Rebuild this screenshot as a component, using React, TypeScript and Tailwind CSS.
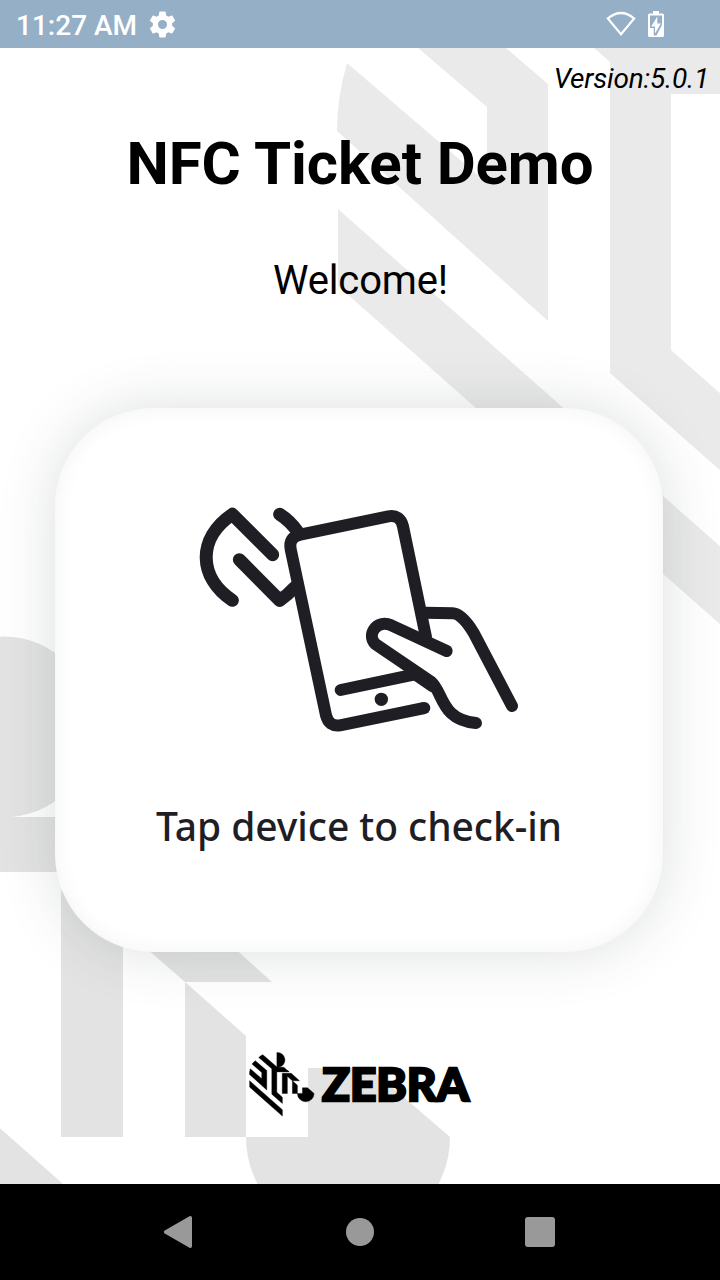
import React from "react";

function ZebraHead() {
  return (
    <>
      <path d="M347 63 L487 183 V107 L368 5 Q386 -18 408 -36 L548 84 V321 L337 131 Q337 97 347 63Z" />
      <path d="M338 209 L739 563 V641 L338 286Z" />
      <path d="M450 -76 Q475 -100 500 -110 L672 40 V-136 A90 90 0 0 1 689 44 H757 L820 99 V94 H671 V350 L739 410 V487 L610 373 V62Z" />
      <path d="M672 90 H809 L819 99 H672Z" />
      <path d="M738 117 H847 L949 209 H862 L800 155 V364 H738Z" />
      <path d="M862 209 L923 263 V364 H862Z" />
      <path d="M923 364 H985 V295 H1047 L1127 364 A102 102 0 0 1 923 364Z" />
    </>
  );
}

function Backdrop() {
  return (
    <svg className="absolute inset-0 h-full w-full" viewBox="0 48 720 1136" aria-hidden="true">
      <g fill="#eaeaea">
        <path d="M347 63 L487 183 V107 L368 5 Q386 -18 408 -36 L548 84 V321 L337 131 Q337 97 347 63Z" />
        <path d="M338 209 L739 563 V641 L338 286Z" />
        <path d="M594 48 H720 V94 H671 V350 L739 410 V487 L610 373 V62Z" />
      </g>
      <g fill="#e3e3e3" transform="translate(-677 773)">
        <ZebraHead />
      </g>
    </svg>
  );
}

function StatusBar() {
  return (
    <header className="flex h-12 shrink-0 items-center bg-[#95afc7] pl-4 pr-14 text-white">
      <span className="mt-1 font-['Roboto',sans-serif] text-[28px] font-medium leading-none">11:27 AM</span>
      <svg className="ml-[10px] h-[31px] w-[31px]" viewBox="0 0 24 24" fill="currentColor">
        <path d="M19.43 12.98c.04-.32.07-.64.07-.98s-.03-.66-.07-.98l2.11-1.65c.19-.15.24-.42.12-.64l-2-3.46c-.12-.22-.39-.3-.61-.22l-2.49 1c-.52-.4-1.08-.73-1.69-.98l-.38-2.65A.49.49 0 0 0 14 2h-4c-.25 0-.46.18-.49.42l-.38 2.65c-.61.25-1.17.59-1.69.98l-2.49-1c-.23-.09-.49 0-.61.22l-2 3.46c-.13.22-.07.49.12.64l2.11 1.65c-.04.32-.07.65-.07.98s.03.66.07.98l-2.11 1.65c-.19.15-.24.42-.12.64l2 3.46c.12.22.39.3.61.22l2.49-1c.52.4 1.08.73 1.69.98l.38 2.65c.03.24.24.42.49.42h4c.25 0 .46-.18.49-.42l.38-2.65c.61-.25 1.17-.59 1.69-.98l2.49 1c.23.09.49 0 .61-.22l2-3.46c.12-.22.07-.49-.12-.64l-2.11-1.65zM12 15.5a3.5 3.5 0 1 1 0-7 3.500 3.500 0 0 1 0 7z" />
      </svg>
      <svg className="ml-auto h-[26px] w-[30px]" viewBox="0 0 30 26" fill="none" stroke="currentColor" strokeWidth="2.2">
        <path d="M1.800 7.500 Q15 -3.500 28.200 7.500 L15 23.200Z" />
      </svg>
      <svg className="ml-3 h-[26px] w-4" viewBox="0 0 16 26">
        <path fill="currentColor" d="M5 0h6v2.500h3.500Q16 2.500 16 4v20.500Q16 26 14.500 26h-13Q0 26 0 24.500V4Q0 2.500 1.500 2.500H5Z" />
        <path fill="#95afc7" d="M2 4.500H14V14L8.500 24.500H5.500V17H2Z" />
        <path fill="currentColor" d="M9.300 5.500V12.500H13L7 22.500V15.500H3.200Z" />
        <path fill="currentColor" d="M2 17H5.500V26H2ZM11.500 19H14.500V26H8.500Z" />
      </svg>
    </header>
  );
}

function TapIllustration() {
  return (
    <svg className="ml-[2px] h-[260px] w-[340px]" viewBox="0 0 1020 780" fill="none" stroke="#1e1e24" strokeLinecap="round" strokeLinejoin="round">
      <g strokeWidth="39">
        <path d="M127 331 C25 263 20 145 127 73 L248 194" />
        <path d="M148 209 L269 331 Q294 314 312 294" />
        <path d="M269 73 Q300 93 322 124" />
      </g>
      <g strokeWidth="36">
        <path d="M703 654 L450 706 Q417 711 408 676 L302 178 Q295 142 331 134 L595 79 Q631 73 639 109 L709 446" strokeLinecap="butt" />
        <path d="M703 654 H702" />
        <path d="M452 600 L685 551" />
        <path d="M770 483 L604 406 C559 387 528 435 557 463 L724 576 C760 607 752 690 858 699" />
        <path d="M705 368 L788 370 Q815 371 850 427 L966 648" />
        <path d="M680 556 L728 589" />
      </g>
      <circle cx="574" cy="628" r="20" fill="#1e1e24" stroke="none" />
    </svg>
  );
}

function ZebraLogo() {
  return (
    <svg className="h-[70px] w-[230px]" viewBox="245 1050 230 70">
      <g transform="translate(222 1063.7) scale(0.08167)" stroke="#000" strokeWidth="5">
        <ZebraHead />
      </g>
      <text x="322" y="1100.500" fontFamily="Lato, sans-serif" fontWeight="900" fontSize="45" textLength="147" lengthAdjust="spacingAndGlyphs" stroke="#000" strokeWidth="2.4">ZEBRA</text>
    </svg>
  );
}

function NavigationBar() {
  return (
    <nav className="flex h-24 shrink-0 items-center justify-between bg-black px-[163px] text-[#999]">
      <svg className="h-8 w-[30px]" viewBox="0 0 30 32" fill="currentColor">
        <path d="M1.700 14.600 L26.500 .3 Q29 -.5 29 2 V30 Q29 32.500 26.500 31.700 L1.700 17.400 Q0 16 1.700 14.600Z" />
      </svg>
      <div className="ml-0.5 h-7 w-7 rounded-full bg-[#999]" />
      <div className="mr-0.5 h-[30px] w-[30px] rounded-[3px] bg-[#999]" />
    </nav>
  );
}

export default function App() {
  return (
    <div className="flex h-[1280px] w-[720px] flex-col overflow-hidden bg-white font-['Roboto',sans-serif] text-black">
      <StatusBar />
      <main className="relative min-h-0 flex-1 overflow-hidden">
        <Backdrop />
        <div className="relative flex h-full flex-col items-center">
          <p className="mt-[15px] self-end pr-[11px] text-[28px] italic leading-8 tracking-[-0.22px]">Version:5.0.1</p>
          <h1 className="mt-[33px] text-[60px] font-bold leading-[72px] tracking-[-0.1px]">NFC Ticket Demo</h1>
          <p className="mt-[57px] pl-px text-[40px] leading-12 tracking-[-0.15px]">Welcome!</p>
          <section className="mr-[2px] mt-[103px] flex h-[544px] w-[608px] shrink-0 flex-col items-center rounded-[98px] bg-white pt-[82px] shadow-[0_0_56px_rgba(45,60,70,0.17),inset_0_0_22px_rgba(0,0,0,0.05)]">
            <TapIllustration />
            <p className="mt-[49px] whitespace-nowrap font-['Noto_Sans',sans-serif] text-[39px] font-medium leading-[54px] tracking-[-0.06px] text-[#1e1e24]">Tap device to check-in</p>
          </section>
          <div className="mt-[98px] flex">
            <ZebraLogo />
          </div>
        </div>
      </main>
      <NavigationBar />
    </div>
  );
}
